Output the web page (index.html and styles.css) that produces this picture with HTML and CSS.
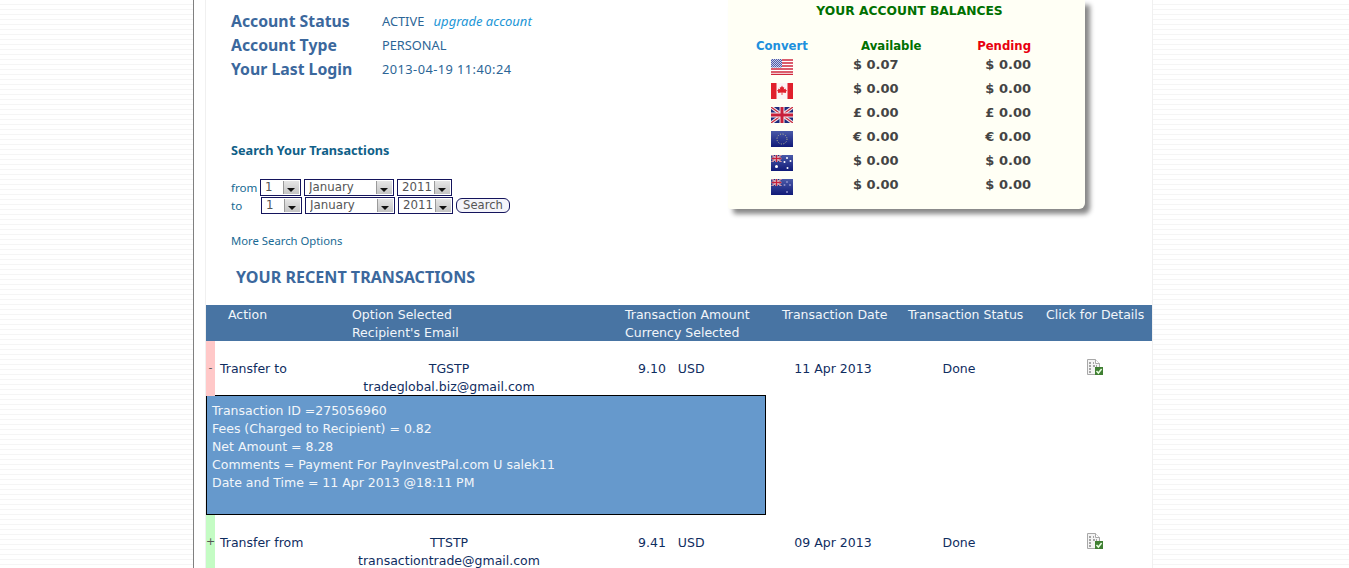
FILE: index.html
```html
<!DOCTYPE html>
<html lang="en">
<head>
<meta charset="utf-8">
<title>Account overview</title>
<link rel="stylesheet" href="styles.css">
</head>
<body>
<svg class="defs" width="0" height="0" aria-hidden="true">
  <defs>
    <linearGradient id="navy" x1="0" y1="0" x2="0" y2="1"><stop offset="0" stop-color="#4a5aa8"/><stop offset="1" stop-color="#101a78"/></linearGradient>
    <pattern id="dither" width="2" height="2" patternUnits="userSpaceOnUse"><rect width="2" height="2" fill="#4c5ca8"/><rect width="1" height="1" fill="#c8cce8"/><rect x="1" y="1" width="1" height="1" fill="#c8cce8"/></pattern>
    <symbol id="union" viewBox="0 0 22 16">
      <rect width="22" height="16" fill="#1c2a7c"/>
      <path d="M0 0L22 16M22 0L0 16" stroke="#f4e8ec" stroke-width="3.4"/>
      <path d="M0 0L22 16M22 0L0 16" stroke="#c8283c" stroke-width="1.2"/>
      <path d="M11 0V16M0 8H22" stroke="#f4e8ec" stroke-width="5"/>
      <path d="M11 0V16M0 8H22" stroke="#c8203a" stroke-width="3"/>
    </symbol>
    <symbol id="doc" viewBox="0 0 16 16">
      <path d="M.5.5H8.5L12.5 4.5V15.5H.5Z" fill="#f4f4f4" stroke="#a8a8a8"/>
      <path d="M8.5.5V4.5H12.5" fill="#fff" stroke="#a8a8a8"/>
      <path d="M2 4H5M6 4H7M2 7H5M6 7H10M2 10H5M2 13H5" stroke="#555" stroke-dasharray="2 1"/>
      <rect x="8" y="8" width="8" height="8" fill="#3f7f32"/>
      <path d="M9.5 12L11.4 14L14.6 10" fill="none" stroke="#e8ffe0" stroke-width="1.5"/>
    </symbol>
  </defs>
</svg>
<div class="page">
  <main class="inner">
    <section class="top">
      <div class="account">
        <dl class="status">
          <dt>Account Status</dt><dd>ACTIVE <a class="upgrade" href="#">upgrade account</a></dd>
          <dt>Account Type</dt><dd>PERSONAL</dd>
          <dt>Your Last Login</dt><dd class="login-date">2013-04-19 11:40:24</dd>
        </dl>
        <h3 class="search-title">Search Your Transactions</h3>
        <form class="search">
          <div class="search-row">
            <span class="range-label">from</span>
            <span class="sel sel-day"><select><option>1</option></select><i class="arrow"></i></span>
            <span class="sel sel-month"><select><option>January</option></select><i class="arrow"></i></span>
            <span class="sel sel-year"><select><option>2011</option></select><i class="arrow"></i></span>
          </div>
          <div class="search-row row-to">
            <span class="range-label">to</span>
            <span class="sel sel-day"><select><option>1</option></select><i class="arrow"></i></span>
            <span class="sel sel-month"><select><option>January</option></select><i class="arrow"></i></span>
            <span class="sel sel-year"><select><option>2011</option></select><i class="arrow"></i></span>
            <button class="search-btn" type="button">Search</button>
          </div>
        </form>
        <a class="more" href="#">More Search Options</a>
      </div>
      <aside class="balances">
        <h3 class="bal-title">YOUR ACCOUNT BALANCES</h3>
        <div class="bal-grid">
          <div class="bh-convert">Convert</div><div class="bh-avail">Available</div><div class="bh-pend">Pending</div>

          <div class="flag"><svg width="22" height="16" viewBox="0 0 22 16"><rect width="22" height="16" fill="#fff"/><path d="M0 1H22M0 4H22M0 7H22M0 10H22M0 13H22M0 15.5H22" stroke="#d0283c" stroke-width="1.4"/><rect width="11" height="8.5" fill="url(#dither)"/></svg></div>
          <div class="amt">$ 0.07</div><div class="amt">$ 0.00</div>

          <div class="flag"><svg width="22" height="16" viewBox="0 0 22 16"><rect width="22" height="16" fill="#fbf4f4"/><rect width="5.5" height="16" fill="#e0202c"/><rect x="16.5" width="5.5" height="16" fill="#e0202c"/><path d="M11 2.5L12 4.5L13.2 4L12.8 6.6L14.4 5.6L15 7L16 7.2L14.8 9L15.2 10L11.4 9.6V12H10.6V9.6L6.8 10L7.2 9L6 7.2L7 7L7.6 5.6L9.2 6.6L8.8 4L10 4.5Z" fill="#e0202c"/></svg></div>
          <div class="amt">$ 0.00</div><div class="amt">$ 0.00</div>

          <div class="flag"><svg width="22" height="16" viewBox="0 0 22 16"><use href="#union" width="22" height="16"/></svg></div>
          <div class="amt">£ 0.00</div><div class="amt">£ 0.00</div>

          <div class="flag"><svg width="22" height="16" viewBox="0 0 22 16"><rect width="22" height="16" fill="url(#navy)"/><circle cx="11" cy="8" r="5" fill="none" stroke="#c8c890" stroke-width="1" stroke-dasharray="1 1.62"/></svg></div>
          <div class="amt">€ 0.00</div><div class="amt">€ 0.00</div>

          <div class="flag"><svg width="22" height="16" viewBox="0 0 22 16"><rect width="22" height="16" fill="url(#navy)"/><use href="#union" width="11" height="7"/><g fill="#fff"><circle cx="5.5" cy="11.5" r="1.5"/><circle cx="16" cy="3" r="1"/><circle cx="19.5" cy="6" r="1"/><circle cx="13.5" cy="7" r="1"/><circle cx="16.5" cy="13" r="1"/></g></svg></div>
          <div class="amt">$ 0.00</div><div class="amt">$ 0.00</div>

          <div class="flag"><svg width="22" height="16" viewBox="0 0 22 16"><rect width="22" height="16" fill="url(#navy)"/><use href="#union" width="11" height="7"/><g fill="#8a8cc8"><circle cx="16" cy="3" r="1"/><circle cx="19" cy="6" r="1"/><circle cx="13.5" cy="6" r="1"/><circle cx="16" cy="13" r="1"/></g></svg></div>
          <div class="amt">$ 0.00</div><div class="amt">$ 0.00</div>
        </div>
      </aside>
    </section>

    <h2 class="recent">YOUR RECENT TRANSACTIONS</h2>

    <div class="txn-head txn-grid">
      <div class="th-action">Action</div>
      <div class="th-option">Option Selected<br>Recipient's Email</div>
      <div class="th-amount">Transaction Amount<br>Currency Selected</div>
      <div class="th-date">Transaction Date</div>
      <div class="th-status">Transaction Status</div>
      <div class="th-details">Click for Details</div>
    </div>

    <div class="txn txn-grid">
      <div class="mark minus">-</div>
      <div class="c-action">Transfer to</div>
      <div class="c-option">TGSTP<br>tradeglobal.biz@gmail.com</div>
      <div class="c-amount">9.10<span class="cur">USD</span></div>
      <div class="c-date">11 Apr 2013</div>
      <div class="c-status">Done</div>
      <div class="c-details"><svg width="16" height="16"><use href="#doc"/></svg></div>
    </div>

    <div class="detail">
      Transaction ID =275056960<br>
      Fees (Charged to Recipient) = 0.82<br>
      Net Amount = 8.28<br>
      Comments = Payment For PayInvestPal.com U salek11<br>
      Date and Time = 11 Apr 2013 @18:11 PM
    </div>

    <div class="txn txn-grid">
      <div class="mark plus">+</div>
      <div class="c-action">Transfer from</div>
      <div class="c-option">TTSTP<br>transactiontrade@gmail.com</div>
      <div class="c-amount">9.41<span class="cur">USD</span></div>
      <div class="c-date">09 Apr 2013</div>
      <div class="c-status">Done</div>
      <div class="c-details"><svg width="16" height="16"><use href="#doc"/></svg></div>
    </div>
  </main>
</div>
</body>
</html>
```
FILE: styles.css
```css
html, body { margin: 0; padding: 0; height: 568px; overflow: hidden; }
body {
  background: repeating-linear-gradient(to bottom, #fff 0, #fff 4px, #f5f5f5 4px, #f5f5f5 5px);
  font-family: "DejaVu Sans", Verdana, sans-serif;
  font-size: 12.5px;
  color: #0f2d5f;
}
.defs { position: absolute; }
.page {
  width: 960px;
  height: 568px;
  margin-left: 193px;
  border-left: 1px solid #808080;
  background: #fff;
  box-sizing: border-box;
}
.inner {
  margin-left: 11px;
  border-left: 1px solid #f0f0f0;
  border-right: 1px solid #f0f0f0;
  width: 946px;
  height: 568px;
}
a { text-decoration: none; }
.top { display: flex; height: 263px; }
.account { width: 522px; padding-left: 25px; box-sizing: border-box; font-family: "Noto Sans", sans-serif; }
.status {
  margin: 9px 0 0;
  display: grid;
  grid-template-columns: 151px 1fr;
  grid-auto-rows: 24px;
  align-items: center;
}
.status dt { font-weight: 700; font-size: 15.8px; color: #3b689d; }
.status dd { margin: 0; font-size: 12.8px; color: #2c6596; }
.status .login-date { letter-spacing: .45px; }
.upgrade { font-style: italic; font-size: 13px; color: #2196d6; margin-left: 6px; }
.search-title { margin: 60px 0 0; font-size: 12.7px; line-height: 18px; color: #0f6088; font-weight: 700; }
.search { margin-top: 19px; }
.search-row { display: flex; align-items: center; gap: 2px; height: 18px; font-family: "DejaVu Sans", sans-serif; }
.range-label { width: 27px; font-size: 11.6px; font-family: "Noto Sans", sans-serif; color: #156a92; }
.row-to .range-label { width: 28px; }
.sel { position: relative; display: block; height: 17px; border: 1px solid #14145c; box-sizing: border-box; background: #fff; }
.sel select {
  appearance: none; -webkit-appearance: none;
  display: block; width: 100%; height: 15px;
  border: 0; padding: 0 0 0 4px; margin: 0;
  background: transparent;
  font: 11.8px "DejaVu Sans", sans-serif;
  color: #555;
}
.sel-day { width: 41px; }
.sel-month { width: 90px; margin-left: 1px; }
.sel-year { width: 55px; margin-left: 1px; }
.arrow {
  position: absolute; right: 1px; top: 1px; width: 16px; height: 13px;
  background: linear-gradient(#e6e6e6, #c4c4c4); border-left: 1px solid #9a9a9a; box-sizing: border-box;
  pointer-events: none;
}
.arrow::after {
  content: ""; position: absolute; left: 3px; top: 7px;
  border: 4px solid transparent; border-top: 4px solid #111; border-bottom: 0;
}
.search-btn {
  margin-left: 1px; width: 54px; height: 15px; padding: 0;
  border: 1px solid #14145c; border-radius: 6px; background: #f4f4fa;
  font: 11.6px "DejaVu Sans", sans-serif; color: #555; line-height: 12px;
}
.more { display: block; margin-top: 18px; font-size: 11.3px; line-height: 18px; color: #1a6a94; }
.balances {
  width: 357px; height: 209px;
  background: #fffff5;
  border-bottom-right-radius: 6px; border-bottom-left-radius: 3px;
  box-shadow: 5px 5px 5px #888;
  font-weight: 700;
}
.bal-title { margin: 0; padding: 4px 0 0 0; text-align: center; font-size: 12.3px; line-height: 15px; color: #007000; position: relative; left: 3px; }
.bal-grid {
  display: grid;
  grid-template-columns: 125px 124px 54px;
  grid-template-rows: 19px repeat(6, 24px);
  margin-top: 17px;
  align-items: center;
}
.bal-grid > .bh-convert, .bal-grid > .bh-avail, .bal-grid > .bh-pend { height: 18px; line-height: 18px; font-size: 11.7px; }
.bh-convert { padding-left: 28px; color: #2090dd; }
.bh-avail { padding-left: 8px; color: #007000; }
.bh-pend { text-align: right; color: #e8000f; }
.flag { padding-left: 43px; height: 16px; line-height: 0; }
.amt { color: #444; font-size: 13px; line-height: 16px; padding-bottom: 4px; white-space: nowrap; }
.amt:nth-child(3n) { text-align: right; }
.recent { margin: 0 0 0 30px; height: 42px; font: 700 16.1px/28px "Noto Sans", sans-serif; color: #3b689d; }
.txn-grid { display: grid; grid-template-columns: 9px 100px 268px 192px 116px 136px 125px; }
.txn-head { height: 36px; background: #4874a3; color: #f2f6fa; line-height: 18px; padding-top: 1px; box-sizing: border-box; grid-template-columns: 109px 268px 192px 116px 136px 125px; }
.th-action { padding-left: 22px; }
.th-option { padding-left: 37px; }
.th-amount { padding-left: 42px; }
.th-date { padding-left: 7px; white-space: nowrap; }
.th-status { padding-left: 17px; white-space: nowrap; }
.th-details { padding-left: 19px; white-space: nowrap; }
.txn { height: 54px; line-height: 18px; }
.txn > div { padding-top: 19px; box-sizing: border-box; }
.txn > .mark { padding-top: 18px; text-align: center; color: #555; font-size: 11px; }
.mark.minus { background: #ffc8c8; }
.mark.plus { background: #c4fcc4; }
.c-action { padding-left: 5px; white-space: nowrap; }
.c-option { text-align: center; white-space: nowrap; }
.c-amount { padding-left: 55px; }
.cur { margin-left: 12px; }
.c-date, .c-status { text-align: center; }
.txn > .c-details { padding-left: 60px; padding-top: 18px; line-height: 0; }
.detail {
  box-sizing: border-box;
  width: 560px; height: 120px;
  border: 1px solid #000;
  background: #6699cc;
  color: #f2f6fa;
  padding: 6px 0 0 5px;
  line-height: 18px;
}
```
